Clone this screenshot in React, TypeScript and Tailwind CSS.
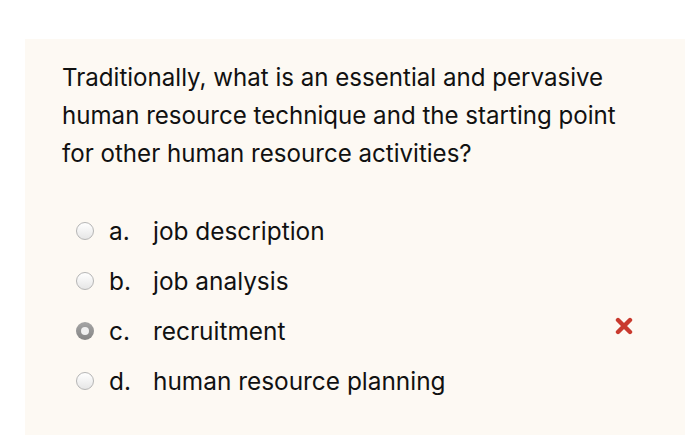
const options = [
  {letter: 'a.', text: 'job description', selected: false, wrong: false},
  {letter: 'b.', text: 'job analysis', selected: false, wrong: false},
  {letter: 'c.', text: 'recruitment', selected: true, wrong: true},
  {letter: 'd.', text: 'human resource planning', selected: false, wrong: false},
];

function Radio({checked}: {checked: boolean}) {
  if (checked) {
    return (
      <span className="flex h-[18px] w-[18px] items-center justify-center rounded-full bg-gradient-to-b from-[#a5a5a5] to-[#858585]">
        <span className="h-[8px] w-[8px] rounded-full bg-[#f0f0f0]" />
      </span>
    );
  }
  return (
    <span className="h-[18px] w-[18px] rounded-full border border-[#b5b5b5] bg-gradient-to-b from-white to-[#e6e6e6]" />
  );
}

export default function App() {
  return (
    <div className="h-[447px] w-[700px] bg-white pt-[39px] pl-[25px] font-['Inter',sans-serif] text-[#111]">
      <div className="h-[396px] w-[660px] bg-[#fdf9f3] pt-[20px] pl-[37px]">
        <p className="text-[24.1px] leading-[38px] pr-[40px]">
          Traditionally, what is an essential and pervasive human resource technique and the starting point for other
          human resource activities?
        </p>
        <ul className="mt-[33px]">
          {options.map((o) => (
            <li key={o.letter} className="flex h-[50px] items-center text-[24.4px]">
              <span className="ml-[10px] flex w-[26px] justify-center">
                <Radio checked={o.selected} />
              </span>
              <span className="ml-[11px] w-[44px]">{o.letter}</span>
              <span className="flex-1">{o.text}</span>
              {o.wrong && (
                <svg width="18" height="18" viewBox="0 0 18 18" className="mr-[52px] -mt-[10px]">
                  <path d="M3 3L15 15M15 3L3 15" stroke="#c93a2e" strokeWidth="4.4" strokeLinecap="round" />
                </svg>
              )}
            </li>
          ))}
        </ul>
      </div>
    </div>
  );
}
